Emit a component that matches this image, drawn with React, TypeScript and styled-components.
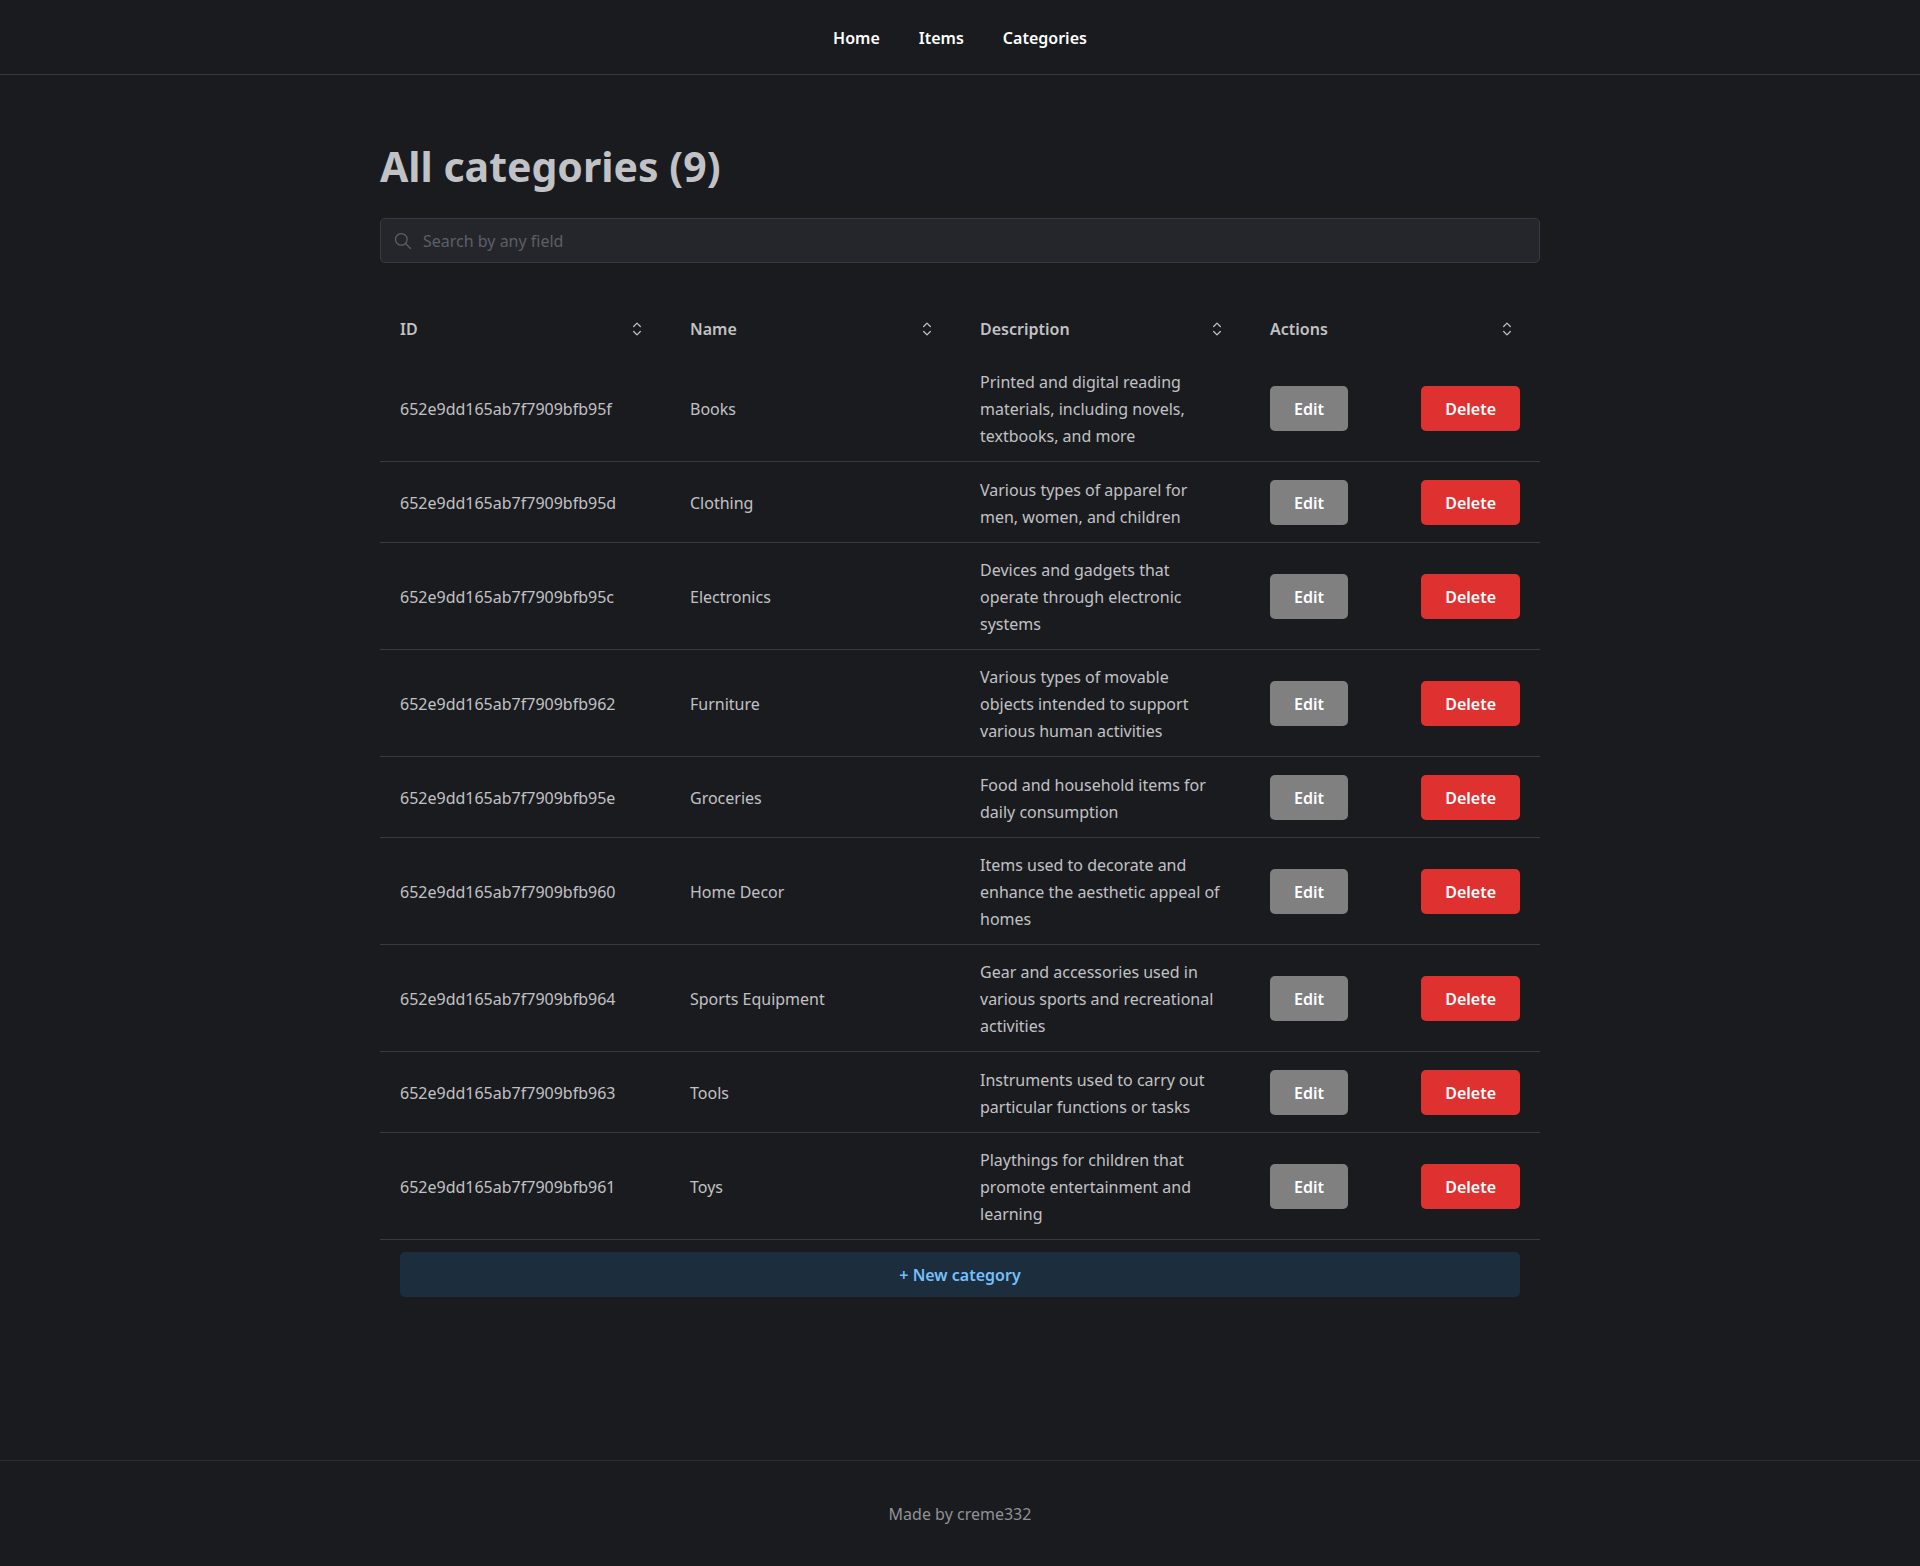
import React, { useState } from "react";
import styled, { createGlobalStyle } from "styled-components";

const GlobalStyle = createGlobalStyle`
  *, *::before, *::after { box-sizing: border-box; }
  body {
    margin: 0;
    background: #1a1b1e;
    color: #c1c2c5;
    font-family: "Noto Sans", "Open Sans", sans-serif;
    font-size: 16px;
    line-height: 27px;
  }
`;

const Page = styled.div`
  min-height: 100vh;
  display: flex;
  flex-direction: column;
`;

const Header = styled.header`
  display: flex;
  justify-content: center;
  padding: 25px 20px 22px;
  border-bottom: 1px solid #373a40;
`;

const Nav = styled.nav`
  display: flex;
  gap: 39px;
`;

const NavLink = styled.a`
  color: #fff;
  font-weight: 600;
  text-decoration: none;
`;

const Main = styled.main`
  flex: 1;
  width: 100%;
  max-width: 1200px;
  margin: 0 auto;
  padding: 64px 20px;
`;

const Title = styled.h1`
  margin: 0 0 24px;
  color: #c1c2c5;
  font-size: 41px;
  line-height: 55px;
  font-weight: 700;
`;

const SearchBox = styled.label`
  display: flex;
  align-items: center;
  height: 45px;
  margin-bottom: 40px;
  padding: 0 12px;
  gap: 10px;
  background: #25262b;
  border: 1px solid #373a40;
  border-radius: 5px;
  color: #5c5f66;
`;

const SearchInput = styled.input`
  flex: 1;
  min-width: 0;
  height: 100%;
  padding: 0;
  border: 0;
  outline: 0;
  background: transparent;
  color: #c1c2c5;
  font: inherit;
  &::placeholder { color: #5c5f66; opacity: 1; }
`;

const Table = styled.table`
  width: 100%;
  table-layout: fixed;
  border-collapse: separate;
  border-spacing: 0;
`;

const HeadCell = styled.th`
  padding: 0;
  text-align: left;
`;

const SortButton = styled.button`
  display: flex;
  align-items: flex-start;
  justify-content: space-between;
  width: 100%;
  padding: 13px 23px 12px 20px;
  border: 0;
  background: transparent;
  color: #c1c2c5;
  font: inherit;
  font-weight: 600;
  cursor: pointer;

  svg {
    margin-top: 3px;
  }
`;

const Row = styled.tr`
  height: 81px;
`;

const Cell = styled.td`
  padding: 14px 20px 11px;
  border-bottom: 1px solid #373a40;
  vertical-align: middle;
`;

const DescriptionCell = styled(Cell)`
  padding-right: 26px;
`;

const ActionsCell = styled(Cell)`
  padding-top: 12px;
  padding-bottom: 12px;
`;

const Actions = styled.div`
  display: flex;
  justify-content: space-between;
`;

const Button = styled.button<{ $tone: string; $color?: string; $wide?: boolean }>`
  width: ${(p) => (p.$wide ? "100%" : "auto")};
  height: 45px;
  padding: 2px 24px 0;
  border: 0;
  border-radius: 5px;
  background: ${(p) => p.$tone};
  color: ${(p) => p.$color ?? "#fff"};
  font: inherit;
  font-weight: 600;
  cursor: pointer;
`;

const TableFooter = styled.div`
  padding: 12px 20px 0;
`;

const Footer = styled.footer`
  padding: 40px 20px 38px;
  border-top: 1px solid #2c2e33;
  color: #909296;
  text-align: center;
`;

const SearchIcon = () => (
  <svg width="20" height="20" viewBox="0 0 24 24" fill="none" stroke="currentColor" strokeWidth="1.5" strokeLinecap="round" strokeLinejoin="round" aria-hidden="true">
    <circle cx="10" cy="10" r="7" />
    <path d="M21 21l-6 -6" />
  </svg>
);

const SortIcon = () => (
  <svg width="20" height="20" viewBox="0 0 24 24" fill="none" stroke="currentColor" strokeWidth="1.5" strokeLinecap="round" strokeLinejoin="round" aria-hidden="true">
    <path d="M8 9l4 -4l4 4" />
    <path d="M16 15l-4 4l-4 -4" />
  </svg>
);

type Category = { id: string; name: string; description: string };

const categories: Category[] = [
  { id: "652e9dd165ab7f7909bfb95f", name: "Books", description: "Printed and digital reading materials, including novels, textbooks, and more" },
  { id: "652e9dd165ab7f7909bfb95d", name: "Clothing", description: "Various types of apparel for men, women, and children" },
  { id: "652e9dd165ab7f7909bfb95c", name: "Electronics", description: "Devices and gadgets that operate through electronic systems" },
  { id: "652e9dd165ab7f7909bfb962", name: "Furniture", description: "Various types of movable objects intended to support various human activities" },
  { id: "652e9dd165ab7f7909bfb95e", name: "Groceries", description: "Food and household items for daily consumption" },
  { id: "652e9dd165ab7f7909bfb960", name: "Home Decor", description: "Items used to decorate and enhance the aesthetic appeal of homes" },
  { id: "652e9dd165ab7f7909bfb964", name: "Sports Equipment", description: "Gear and accessories used in various sports and recreational activities" },
  { id: "652e9dd165ab7f7909bfb963", name: "Tools", description: "Instruments used to carry out particular functions or tasks" },
  { id: "652e9dd165ab7f7909bfb961", name: "Toys", description: "Playthings for children that promote entertainment and learning" },
];

const columns = ["ID", "Name", "Description", "Actions"];

export default function App() {
  const [query, setQuery] = useState("");
  const needle = query.trim().toLowerCase();
  const visible = categories.filter((c) =>
    [c.id, c.name, c.description].some((field) => field.toLowerCase().includes(needle))
  );

  return (
    <Page>
      <GlobalStyle />
      <Header>
        <Nav>
          <NavLink href="#home">Home</NavLink>
          <NavLink href="#items">Items</NavLink>
          <NavLink href="#categories">Categories</NavLink>
        </Nav>
      </Header>
      <Main>
        <Title>All categories ({categories.length})</Title>
        <SearchBox>
          <SearchIcon />
          <SearchInput
            type="text"
            aria-label="Search by any field"
            placeholder="Search by any field"
            value={query}
            onChange={(e) => setQuery(e.target.value)}
          />
        </SearchBox>
        <Table>
          <thead>
            <tr>
              {columns.map((label) => (
                <HeadCell key={label} scope="col">
                  <SortButton type="button">
                    {label}
                    <SortIcon />
                  </SortButton>
                </HeadCell>
              ))}
            </tr>
          </thead>
          <tbody>
            {visible.map((c) => (
              <Row key={c.id}>
                <Cell>{c.id}</Cell>
                <Cell>{c.name}</Cell>
                <DescriptionCell>{c.description}</DescriptionCell>
                <ActionsCell>
                  <Actions>
                    <Button type="button" $tone="#808080">Edit</Button>
                    <Button type="button" $tone="#e03131">Delete</Button>
                  </Actions>
                </ActionsCell>
              </Row>
            ))}
          </tbody>
        </Table>
        <TableFooter>
          <Button type="button" $wide $tone="#1c2d3d" $color="#74c0fc">+ New category</Button>
        </TableFooter>
      </Main>
      <Footer>Made by creme332</Footer>
    </Page>
  );
}
